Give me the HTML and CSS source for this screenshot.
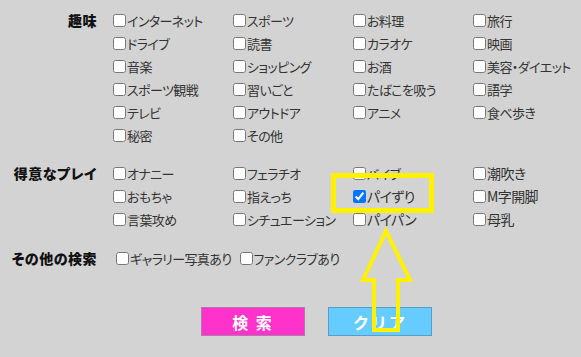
FILE: index.html
```html
<!DOCTYPE html>
<html lang="ja">
<head>
    <meta charset="UTF-8">
    <meta name="viewport" content="width=device-width, initial-scale=1.0">
    <title>詳細検索</title>
    <link rel="stylesheet" href="styles.css">
</head>
<body>
    <form class="search">
        <div class="section">
            <div class="heading">趣味</div>
            <div class="options">
                <label class="option"><input type="checkbox">インターネット</label>
                <label class="option"><input type="checkbox">スポーツ</label>
                <label class="option"><input type="checkbox">お料理</label>
                <label class="option"><input type="checkbox">旅行</label>
                <label class="option"><input type="checkbox">ドライブ</label>
                <label class="option"><input type="checkbox">読書</label>
                <label class="option"><input type="checkbox">カラオケ</label>
                <label class="option"><input type="checkbox">映画</label>
                <label class="option"><input type="checkbox">音楽</label>
                <label class="option"><input type="checkbox">ショッピング</label>
                <label class="option"><input type="checkbox">お酒</label>
                <label class="option"><input type="checkbox">美容・ダイエット</label>
                <label class="option"><input type="checkbox">スポーツ観戦</label>
                <label class="option"><input type="checkbox">習いごと</label>
                <label class="option"><input type="checkbox">たばこを吸う</label>
                <label class="option"><input type="checkbox">語学</label>
                <label class="option"><input type="checkbox">テレビ</label>
                <label class="option"><input type="checkbox">アウトドア</label>
                <label class="option"><input type="checkbox">アニメ</label>
                <label class="option"><input type="checkbox">食べ歩き</label>
                <label class="option"><input type="checkbox">秘密</label>
                <label class="option"><input type="checkbox">その他</label>
            </div>
        </div>

        <div class="section">
            <div class="heading">得意なプレイ</div>
            <div class="options">
                <label class="option"><input type="checkbox">オナニー</label>
                <label class="option"><input type="checkbox">フェラチオ</label>
                <label class="option"><input type="checkbox">バイブ</label>
                <label class="option large"><input type="checkbox">潮吹き</label>
                <label class="option"><input type="checkbox">おもちゃ</label>
                <label class="option"><input type="checkbox">指えっち</label>
                <label class="option large"><input type="checkbox" checked>パイずり</label>
                <label class="option large"><input type="checkbox">M字開脚</label>
                <label class="option"><input type="checkbox">言葉攻め</label>
                <label class="option"><input type="checkbox">シチュエーション</label>
                <label class="option large"><input type="checkbox">パイパン</label>
                <label class="option large"><input type="checkbox">母乳</label>
            </div>
        </div>

        <div class="section">
            <div class="heading">その他の検索</div>
            <div class="options-inline">
                <label class="option"><input type="checkbox">ギャラリー写真あり</label>
                <label class="option"><input type="checkbox">ファンクラブあり</label>
            </div>
        </div>

        <div class="buttons">
            <button type="submit" class="btn btn-search">検 索</button>
            <button type="reset" class="btn btn-clear">クリア</button>
        </div>
    </form>

    <!-- 注釈（黄色の枠と矢印） -->
    <svg class="annotation" width="581" height="357" viewBox="0 0 581 357">
        <rect x="333.5" y="175.5" width="98" height="35" fill="none" stroke="#fff100" stroke-width="5"/>
        <polygon points="386,231 410,280 398,280 398,330 374,330 374,280 363,280" fill="none" stroke="#fff100" stroke-width="4" stroke-linejoin="miter"/>
    </svg>
</body>
</html>
```

FILE: styles.css
```css
* {
    margin: 0;
    padding: 0;
    box-sizing: border-box;
}

body {
    background-color: #d3d3d3;
    color: #333;
    font-family: "Noto Sans CJK JP", "Noto Sans", sans-serif;
    font-size: 13px;
    font-feature-settings: "palt";
    width: 581px;
    height: 357px;
    overflow: hidden;
    position: relative;
}

.search {
    padding-top: 9px;
}

.section {
    display: grid;
    grid-template-columns: 97px 1fr;
    column-gap: 16px;
    margin-bottom: 15px;
}

.section:nth-child(2) {
    margin-bottom: 16px;
}

.heading {
    text-align: right;
    font-weight: 900;
    color: #111;
    font-size: 14px;
    line-height: 23px;
    letter-spacing: 0.5px;
}

.options {
    display: grid;
    grid-template-columns: repeat(4, 120px);
    grid-auto-rows: 23px;
}

.option {
    display: flex;
    align-items: center;
    white-space: nowrap;
    line-height: 23px;
    letter-spacing: -0.6px;
}

.option.large {
    font-size: 14px;
}

.option input {
    width: 13px;
    height: 13px;
    margin: 0 1px 0 0;
    flex-shrink: 0;
}

.options-inline {
    display: flex;
    gap: 8px;
    padding-left: 3px;
}

.buttons {
    display: flex;
    gap: 23px;
    padding-left: 201px;
    margin-top: 37px;
}

.btn {
    width: 104px;
    height: 29px;
    color: white;
    font-family: "Noto Sans CJK JP", sans-serif;
    font-size: 16px;
    font-weight: bold;
    letter-spacing: 2px;
    cursor: pointer;
}

.btn-search {
    background-color: #ff33cc;
    border: 1px solid #b07aa8;
}

.btn-clear {
    background-color: #66ccff;
    border: 1px solid #5a9bc8;
}

.annotation {
    position: absolute;
    left: 0;
    top: 0;
    pointer-events: none;
}
```
